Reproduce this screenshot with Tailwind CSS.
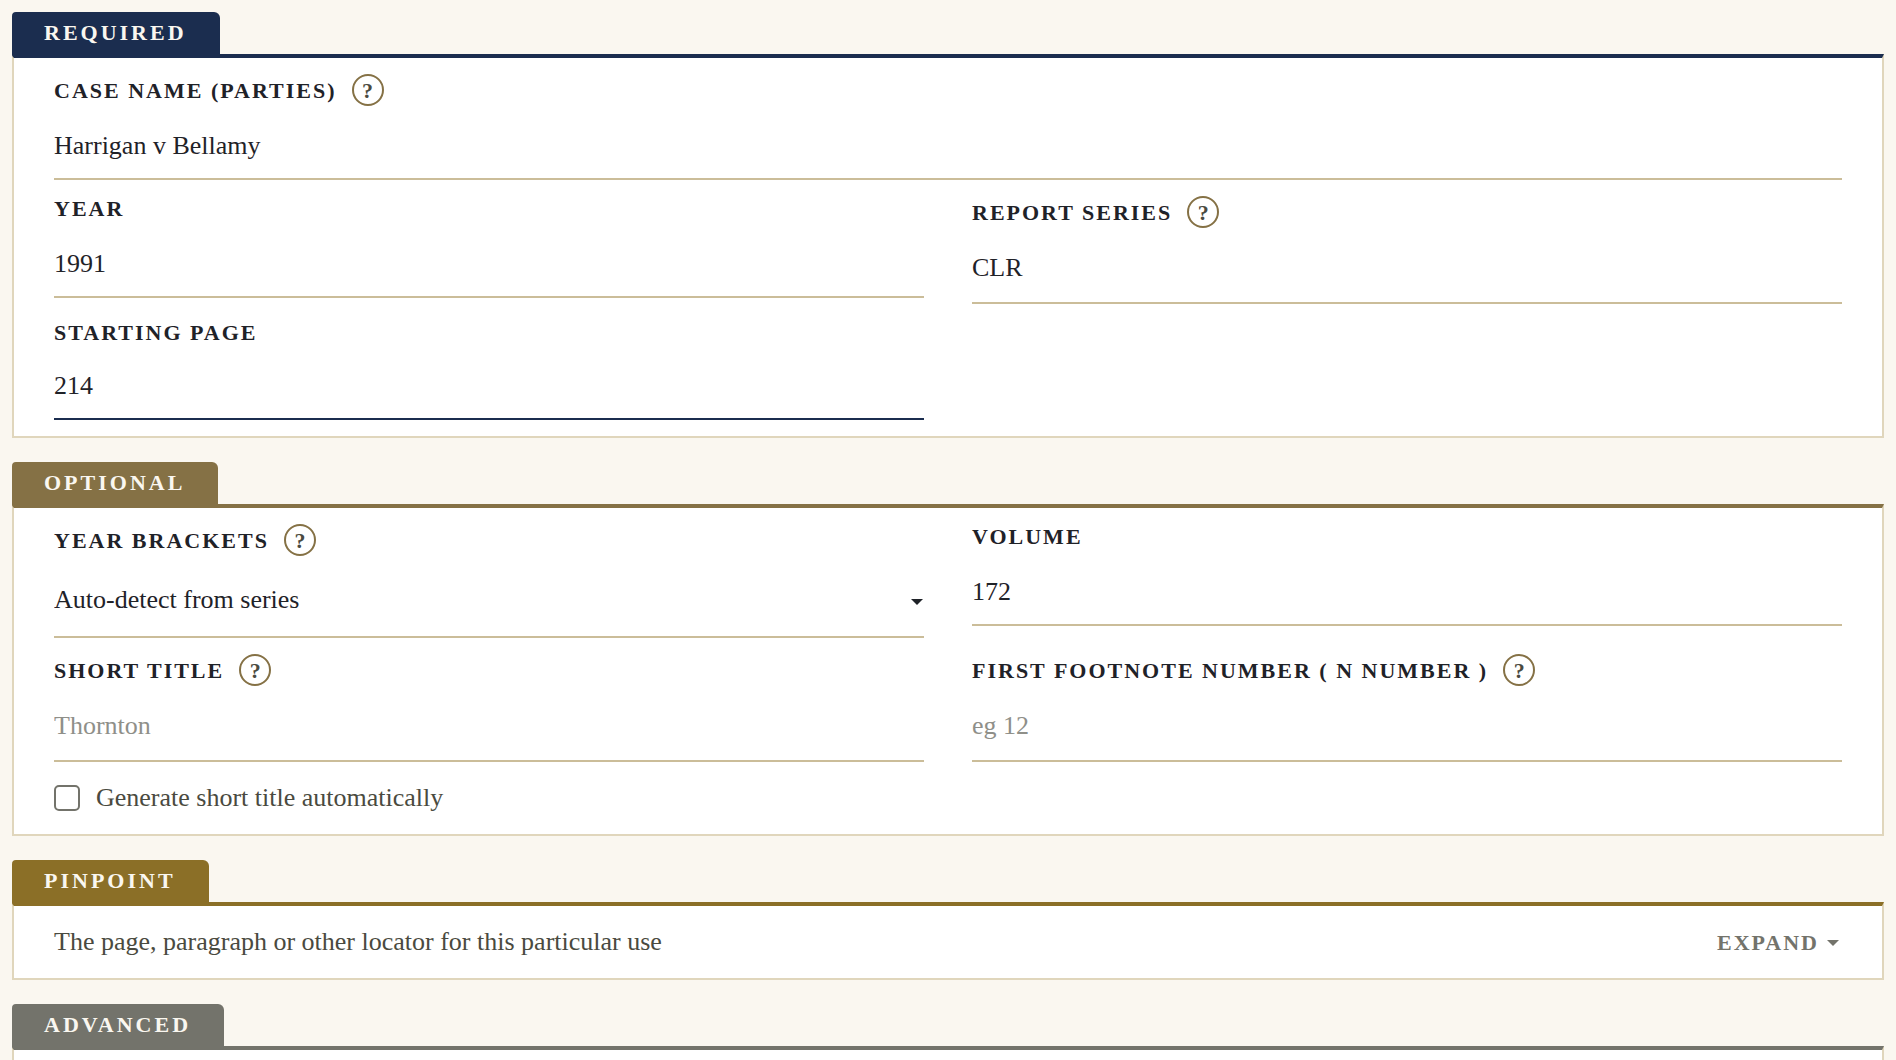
<!DOCTYPE html>
<html lang="en">
<head>
<meta charset="utf-8">
<meta name="viewport" content="width=device-width, initial-scale=1">
<title>Case citation</title>
<script src="https://cdn.jsdelivr.net/npm/@tailwindcss/browser@4"></script>
</head>
<body class="bg-[#faf7f0] font-['Liberation_Serif',serif] text-[26px] text-[#1f2228]">
<form class="flex flex-col gap-6 p-3">

  <section>
    <h2 class="relative z-10 -mb-1 w-fit rounded-[4px] rounded-tr-[6px] bg-[#1b2d4f] pt-2 pr-[33px] pb-3 pl-8 text-[22px] leading-[26px] font-bold tracking-[3px] text-[#faf7f0]">REQUIRED</h2>
    <div class="grid grid-cols-2 items-start gap-x-12 gap-y-4 border-2 border-t-4 border-[#e0d6bc] border-t-[#1b2d4f] bg-white px-10 py-4">
      <div class="col-span-2">
        <div class="flex h-8 items-center gap-[15px] text-[22px] font-bold tracking-[2px]">
          <label for="case">CASE NAME (PARTIES)</label>
          <button type="button" aria-label="Help: case name" class="flex size-8 items-center justify-center rounded-full border-2 border-[#857145] tracking-normal text-[#4a4a40]">?</button>
        </div>
        <input id="case" type="text" value="Harrigan v Bellamy" class="block h-[74px] w-full border-b-2 border-[#cbbd99] pt-2 outline-none">
      </div>
      <div>
        <label for="year" class="block h-7 text-[22px] leading-[26px] font-bold tracking-[2px]">YEAR</label>
        <input id="year" type="text" value="1991" class="block h-[74px] w-full border-b-2 border-[#cbbd99] pt-2 outline-none">
      </div>
      <div>
        <div class="flex h-8 items-center gap-[15px] text-[22px] font-bold tracking-[2px]">
          <label for="series">REPORT SERIES</label>
          <button type="button" aria-label="Help: report series" class="flex size-8 items-center justify-center rounded-full border-2 border-[#857145] tracking-normal text-[#4a4a40]">?</button>
        </div>
        <input id="series" type="text" value="CLR" class="block h-[76px] w-full border-b-2 border-[#cbbd99] pt-1.5 outline-none">
      </div>
      <div>
        <label for="start" class="block h-[26px] text-[22px] leading-[26px] font-bold tracking-[2px]">STARTING PAGE</label>
        <input id="start" type="text" value="214" class="block h-[74px] w-full border-b-2 border-[#1b2d4f] pt-2 outline-none">
      </div>
    </div>
  </section>

  <section>
    <h2 class="relative z-10 -mb-1 w-fit rounded-[4px] rounded-tr-[6px] bg-[#857145] pt-2 pr-[33px] pb-3 pl-8 text-[22px] leading-[26px] font-bold tracking-[3px] text-[#faf7f0]">OPTIONAL</h2>
    <div class="grid grid-cols-2 items-start gap-x-12 gap-y-4 border-2 border-t-4 border-[#e0d6bc] border-t-[#857145] bg-white px-10 py-4">
      <div>
        <div class="flex h-8 items-center gap-[15px] text-[22px] font-bold tracking-[2px]">
          <label for="brackets">YEAR BRACKETS</label>
          <button type="button" aria-label="Help: year brackets" class="flex size-8 items-center justify-center rounded-full border-2 border-[#857145] tracking-normal text-[#4a4a40]">?</button>
        </div>
        <div class="relative">
          <select id="brackets" class="block h-[82px] w-full appearance-none border-b-2 border-[#cbbd99] pt-1.5 outline-none">
            <option>Auto-detect from series</option>
            <option>Round brackets</option>
            <option>Square brackets</option>
          </select>
          <svg class="pointer-events-none absolute top-[43px] right-px h-1.5 w-3" viewBox="0 0 12 6" fill="currentColor" aria-hidden="true"><path d="M0 0h12L6 6z"/></svg>
        </div>
      </div>
      <div>
        <label for="volume" class="block h-7 text-[22px] leading-[26px] font-bold tracking-[2px]">VOLUME</label>
        <input id="volume" type="text" value="172" class="block h-[74px] w-full border-b-2 border-[#cbbd99] pt-2 outline-none">
      </div>
      <div>
        <div class="flex h-8 items-center gap-[15px] text-[22px] font-bold tracking-[2px]">
          <label for="short">SHORT TITLE</label>
          <button type="button" aria-label="Help: short title" class="flex size-8 items-center justify-center rounded-full border-2 border-[#857145] tracking-normal text-[#4a4a40]">?</button>
        </div>
        <input id="short" type="text" placeholder="Thornton" class="block h-[76px] w-full border-b-2 border-[#cbbd99] pt-1.5 outline-none placeholder:text-[#8f8f89]">
      </div>
      <div>
        <div class="flex h-8 items-center gap-[15px] text-[22px] font-bold tracking-[2px]">
          <label for="footnote">FIRST FOOTNOTE NUMBER ( N NUMBER )</label>
          <button type="button" aria-label="Help: first footnote number" class="flex size-8 items-center justify-center rounded-full border-2 border-[#857145] tracking-normal text-[#4a4a40]">?</button>
        </div>
        <input id="footnote" type="text" placeholder="eg 12" class="block h-[76px] w-full border-b-2 border-[#cbbd99] pt-1.5 outline-none placeholder:text-[#8f8f89]">
      </div>
      <div class="col-span-2 flex h-10 items-center gap-4 leading-10 text-[#4a4a40]">
        <input id="auto" type="checkbox" class="size-[26px] appearance-none rounded-[5px] border-2 border-[#73736b] bg-white checked:bg-[#73736b]">
        <label for="auto">Generate short title automatically</label>
      </div>
    </div>
  </section>

  <section>
    <h2 class="relative z-10 -mb-1 w-fit rounded-[4px] rounded-tr-[6px] bg-[#8b6f27] pt-2 pr-[33px] pb-3 pl-8 text-[22px] leading-[26px] font-bold tracking-[3px] text-[#faf7f0]">PINPOINT</h2>
    <div class="flex items-center justify-between border-2 border-t-4 border-[#e0d6bc] border-t-[#8b6f27] bg-white px-10 py-4 leading-10 text-[#4a4a40]">
      <p>The page, paragraph or other locator for this particular use</p>
      <button type="button" aria-expanded="false" class="flex items-center gap-2 pt-0.5 pr-[3px] text-[22px] leading-[38px] font-bold tracking-[2px] text-[#73736b]">
        EXPAND
        <svg class="h-1.5 w-3" viewBox="0 0 12 6" fill="currentColor" aria-hidden="true"><path d="M0 0h12L6 6z"/></svg>
      </button>
    </div>
  </section>

  <section>
    <h2 class="relative z-10 -mb-1 w-fit rounded-[4px] rounded-tr-[6px] bg-[#73736b] pt-2 pr-[33px] pb-3 pl-8 text-[22px] leading-[26px] font-bold tracking-[3px] text-[#faf7f0]">ADVANCED</h2>
    <div class="border-2 border-t-4 border-[#e0d6bc] border-t-[#73736b] bg-white px-10 py-4"></div>
  </section>

</form>
</body>
</html>
